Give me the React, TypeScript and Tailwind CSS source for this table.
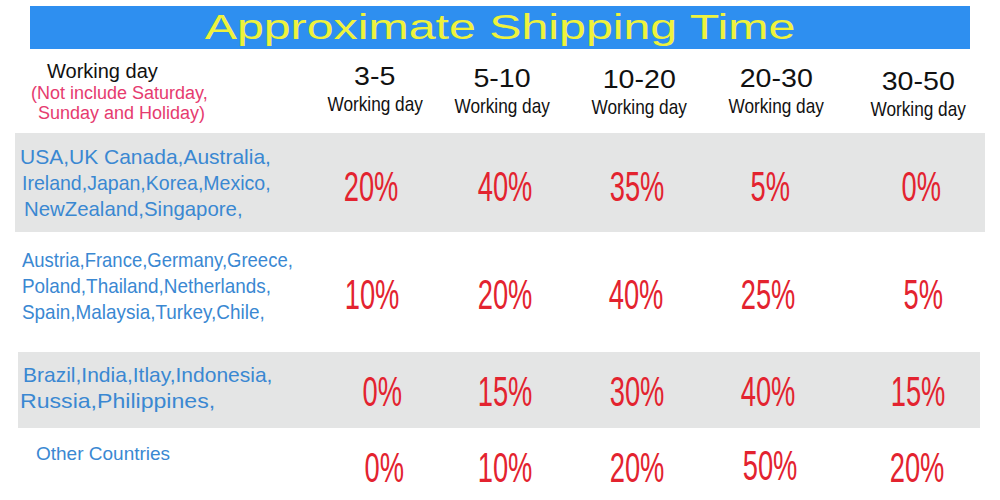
import React from "react";

type Line = { t: string; c: string };
type Row = {
  wrap: string;
  inner: string;
  cols: string;
  textCell: string;
  lines: Line[];
  pcts: { v: string; c: string }[];
};

const COUNTRY = "text-[#3a88d2] text-[21px] leading-[26px]";
const PCT = "inline-block scale-x-[0.65] text-[42px] leading-[48px] text-[#e3232f]";

const rows: Row[] = [
  {
    wrap: "pl-[15px] pr-[15px]",
    inner: "h-[99px] bg-[#e4e5e5]",
    cols: "grid-cols-[300px_120px_140px_125px_140px_145px]",
    textCell: "",
    lines: [
      { t: "USA,UK Canada,Australia,", c: "pl-[5px]" },
      { t: "Ireland,Japan,Korea,Mexico,", c: "pl-[7px] [&>span]:scale-x-[0.93]" },
      { t: "NewZealand,Singapore,", c: "pl-[9px] [&>span]:scale-x-[0.97]" },
    ],
    pcts: [
      { v: "20%", c: "translate-y-[4px] -translate-x-[4px]" },
      { v: "40%", c: "translate-y-[4px]" },
      { v: "35%", c: "translate-y-[4px]" },
      { v: "5%", c: "translate-y-[4px]" },
      { v: "0%", c: "translate-y-[4px] translate-x-[9px]" },
    ],
  },
  {
    wrap: "",
    inner: "h-[120px] bg-white",
    cols: "grid-cols-[315px_120px_140px_125px_140px_160px]",
    textCell: "pb-[12px]",
    lines: [
      { t: "Austria,France,Germany,Greece,", c: "pl-[22px] [&>span]:scale-x-[0.88]" },
      { t: "Poland,Thailand,Netherlands,", c: "pl-[22px] [&>span]:scale-x-[0.9]" },
      { t: "Spain,Malaysia,Turkey,Chile,", c: "pl-[22px] [&>span]:scale-x-[0.9]" },
    ],
    pcts: [
      { v: "10%", c: "translate-y-[3px] -translate-x-[3px]" },
      { v: "20%", c: "translate-y-[3px]" },
      { v: "40%", c: "translate-y-[3px] -translate-x-[1px]" },
      { v: "25%", c: "translate-y-[3px] -translate-x-[2px]" },
      { v: "5%", c: "translate-y-[3px] translate-x-[3px]" },
    ],
  },
  {
    wrap: "pl-[18px] pr-[20px]",
    inner: "h-[76px] bg-[#e4e5e5]",
    cols: "grid-cols-[297px_120px_140px_125px_140px_140px]",
    textCell: "pb-[4px]",
    lines: [
      { t: "Brazil,India,Itlay,Indonesia,", c: "pl-[5px]" },
      { t: "Russia,Philippines,", c: "pl-[2px] [&>span]:scale-x-[1.1]" },
    ],
    pcts: [
      { v: "0%", c: "translate-y-[2px] translate-x-[7px]" },
      { v: "15%", c: "translate-y-[2px]" },
      { v: "30%", c: "translate-y-[2px]" },
      { v: "40%", c: "translate-y-[2px] -translate-x-[2px]" },
      { v: "15%", c: "translate-y-[2px] translate-x-[8px]" },
    ],
  },
  {
    wrap: "",
    inner: "h-[72px] bg-white",
    cols: "grid-cols-[315px_120px_140px_125px_140px_160px]",
    textCell: "pb-[20px]",
    lines: [{ t: "Other Countries", c: "pl-[36px] text-[19px]" }],
    pcts: [
      { v: "0%", c: "translate-y-[4px] translate-x-[9px]" },
      { v: "10%", c: "translate-y-[4px]" },
      { v: "20%", c: "translate-y-[4px]" },
      { v: "50%", c: "translate-y-[2px]" },
      { v: "20%", c: "translate-y-[4px] -translate-x-[3px]" },
    ],
  },
];

const heads = [
  { d: "3-5", c: "" },
  { d: "5-10", c: "translate-y-[2px] -translate-x-[3px]" },
  { d: "10-20", c: "translate-y-[3px] translate-x-[2px]" },
  { d: "20-30", c: "translate-y-[2px] translate-x-[6px]" },
  { d: "30-50", c: "translate-y-[5px] -translate-x-[2px]" },
];

export default function App() {
  return (
    <div className="w-[1000px] h-[500px] overflow-hidden bg-white font-['Liberation_Sans',Arial,sans-serif]">
      <div className="pt-[6px] px-[30px]">
        <div className="h-[43px] bg-[#2e8ff0] flex items-center justify-center">
          <span className="inline-block scale-x-[1.38] -translate-y-[1px] text-[35px] leading-[43px] text-[#eef23c] whitespace-nowrap">
            Approximate Shipping Time
          </span>
        </div>
      </div>

      <div className="h-[84px] grid grid-cols-[315px_120px_140px_125px_140px_160px]">
        <div className="pt-[11px]">
          <div className="pl-[47px] text-[20px] leading-[23px] text-[#111]">Working day</div>
          <div className="pl-[31px] text-[18px] leading-[20px] text-[#e63b6f]">(Not include Saturday,</div>
          <div className="pl-[38px] text-[18px] leading-[20px] text-[#e63b6f]">Sunday and Holiday)</div>
        </div>
        {heads.map((h) => (
          <div key={h.d} className={`pt-[13px] flex flex-col items-center text-[#111] ${h.c}`}>
            <div className="text-[26px] leading-[29px] whitespace-nowrap">
              <span className="inline-block scale-x-[1.1]">{h.d}</span>
            </div>
            <div className="mt-[1px] text-[21px] leading-[24px] whitespace-nowrap">
              <span className="inline-block scale-x-[0.82]">Working day</span>
            </div>
          </div>
        ))}
      </div>

      {rows.map((r, i) => (
        <div key={i} className={r.wrap}>
          <div className={`grid items-center ${r.cols} ${r.inner}`}>
            <div className={`${COUNTRY} ${r.textCell}`}>
              {r.lines.map((l) => (
                <div key={l.t} className={`whitespace-nowrap ${l.c}`}>
                  <span className="inline-block origin-left">{l.t}</span>
                </div>
              ))}
            </div>
            {r.pcts.map((p, j) => (
              <div key={j} className="text-center whitespace-nowrap">
                <span className={`${PCT} ${p.c}`}>{p.v}</span>
              </div>
            ))}
          </div>
        </div>
      ))}
    </div>
  );
}
